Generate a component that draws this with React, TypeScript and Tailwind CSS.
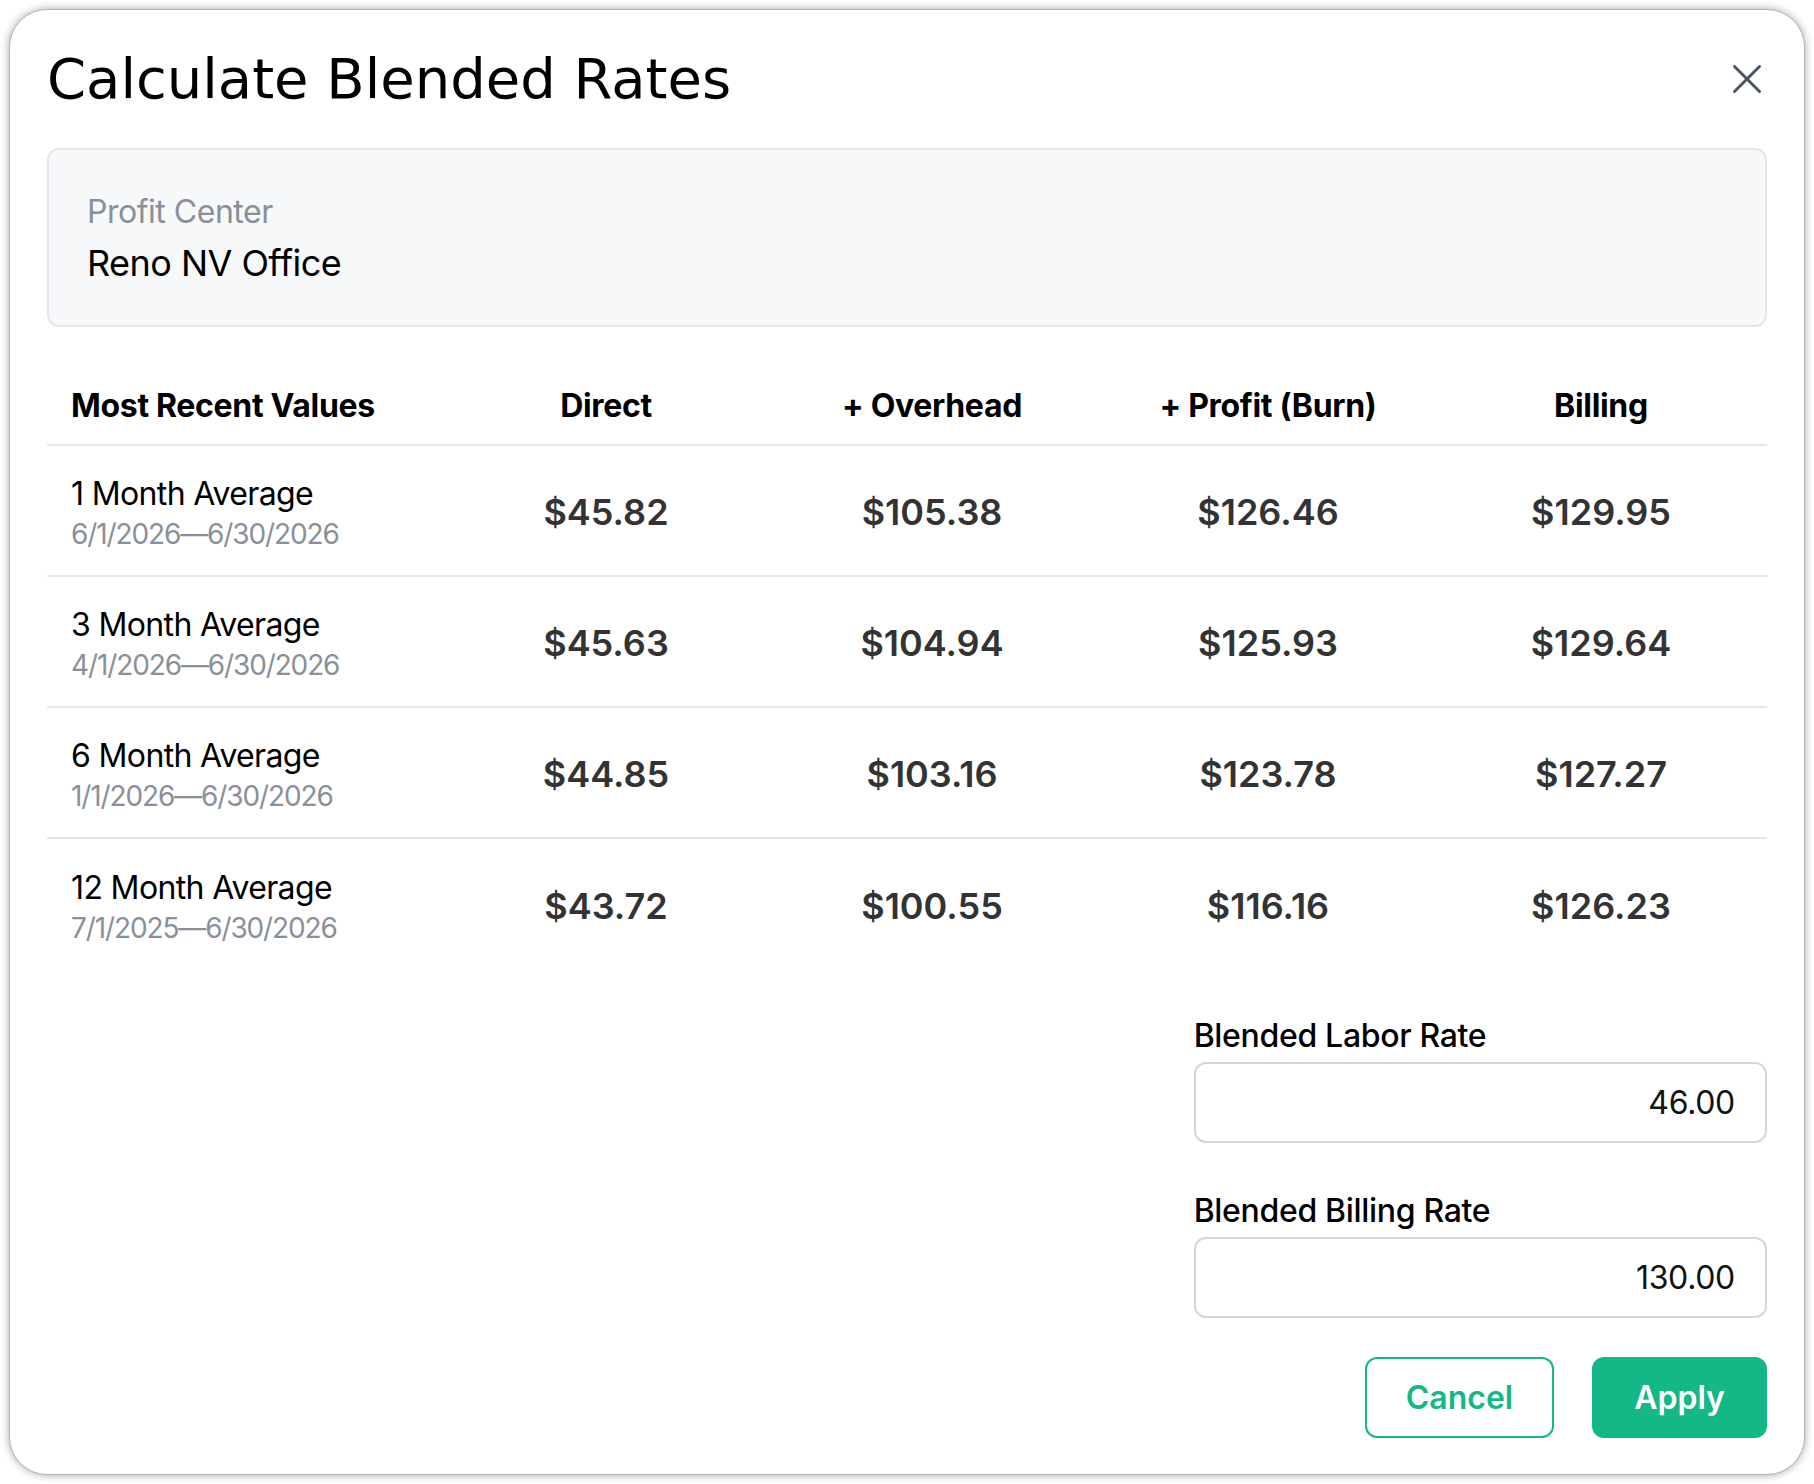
import React from "react";

interface RateRow {
  label: string;
  range: string;
  direct: string;
  overhead: string;
  profit: string;
  billing: string;
}

const rows: RateRow[] = [
  { label: "1 Month Average", range: "6/1/2026—6/30/2026", direct: "$45.82", overhead: "$105.38", profit: "$126.46", billing: "$129.95" },
  { label: "3 Month Average", range: "4/1/2026—6/30/2026", direct: "$45.63", overhead: "$104.94", profit: "$125.93", billing: "$129.64" },
  { label: "6 Month Average", range: "1/1/2026—6/30/2026", direct: "$44.85", overhead: "$103.16", profit: "$123.78", billing: "$127.27" },
  { label: "12 Month Average", range: "7/1/2025—6/30/2026", direct: "$43.72", overhead: "$100.55", profit: "$116.16", billing: "$126.23" },
];

const cols = "grid grid-cols-[402px_314px_338px_334px_1fr]";

function CloseIcon() {
  return (
    <svg width="30" height="30" viewBox="0 0 30 30" fill="none" stroke="#4b5563" strokeWidth="3" strokeLinecap="round">
      <path d="M2.5 2.5 L27.5 27.5 M27.5 2.5 L2.5 27.5" />
    </svg>
  );
}

function RateField({ label, value }: { label: string; value: string }) {
  return (
    <div className="flex flex-col">
      <label className="text-[32px] leading-[48px] font-medium tracking-[-0.01em] text-black">{label}</label>
      <input
        readOnly
        value={value}
        className="mt-[2px] h-[81px] w-full rounded-[12px] border-2 border-[#d3d7dc] bg-white pr-[30px] text-right text-[32px] tracking-[-0.01em] text-[#111] outline-none font-['Inter']"
      />
    </div>
  );
}

export default function App() {
  return (
    <div className="w-[1814px] h-[1484px] bg-white p-[9px] font-['Inter',sans-serif]">
      <div className="h-full rounded-[38px] border border-[#b3b3b3] bg-white px-[37px] pt-[35px] pb-[36px] shadow-[0_0_8px_rgba(0,0,0,0.35)]">
        <div className="flex items-center justify-between">
          <h1 className="font-['DejaVu_Sans',sans-serif] text-[56px] leading-[68px] font-normal text-black">
            Calculate Blended Rates
          </h1>
          <button className="flex h-[40px] w-[40px] items-center justify-center">
            <CloseIcon />
          </button>
        </div>

        <div className="mt-[35px] rounded-[12px] border-2 border-[#e3e6ea] bg-[#f7f8fa] px-[38px] pt-[38px] pb-[35px]">
          <div className="text-[32px] leading-[48px] tracking-[-0.015em] text-[#8a9099]">Profit Center</div>
          <div className="text-[36px] leading-[54px] tracking-[-0.015em] text-black">Reno NV Office</div>
        </div>

        <div className="mt-[40px]">
          <div className={`${cols} border-b-2 border-[#e3e6ea] pt-[15px] pb-[14px] text-[32px] leading-[48px] font-bold tracking-[-0.01em] text-black`}>
            <div className="pl-[24px]">Most Recent Values</div>
            <div className="text-center">Direct</div>
            <div className="text-center">+ Overhead</div>
            <div className="text-center">+ Profit (Burn)</div>
            <div className="text-center">Billing</div>
          </div>
          {rows.map((r, i) => (
            <div
              key={r.label}
              className={`${cols} h-[131px] items-center ${i < rows.length - 1 ? "border-b-2 border-[#e3e6ea]" : ""}`}
            >
              <div className="pl-[24px] pt-[7px]">
                <div className="text-[32px] leading-[40px] tracking-[-0.02em] text-black">{r.label}</div>
                <div className="text-[28px] leading-[40px] tracking-[-0.04em] text-[#8a9099]">{r.range}</div>
              </div>
              <div className="pt-[2px] text-center text-[36px] font-semibold text-[#333]">{r.direct}</div>
              <div className="pt-[2px] text-center text-[36px] font-semibold text-[#333]">{r.overhead}</div>
              <div className="pt-[2px] text-center text-[36px] font-semibold text-[#333]">{r.profit}</div>
              <div className="pt-[2px] text-center text-[36px] font-semibold text-[#333]">{r.billing}</div>
            </div>
          ))}
        </div>

        <div className="mt-[42px] grid grid-cols-3">
          <div className="col-start-3 flex flex-col gap-[44px]">
            <RateField label="Blended Labor Rate" value="46.00" />
            <RateField label="Blended Billing Rate" value="130.00" />
          </div>
        </div>

        <div className="mt-[39px] flex justify-end gap-[38px]">
          <button className="h-[81px] w-[189px] rounded-[12px] border-2 border-[#14b886] bg-white text-[32px] font-semibold text-[#14b886]">
            Cancel
          </button>
          <button className="h-[81px] w-[175px] rounded-[12px] border-2 border-[#14b886] bg-[#14b886] text-[32px] font-semibold text-white">
            Apply
          </button>
        </div>
      </div>
    </div>
  );
}
